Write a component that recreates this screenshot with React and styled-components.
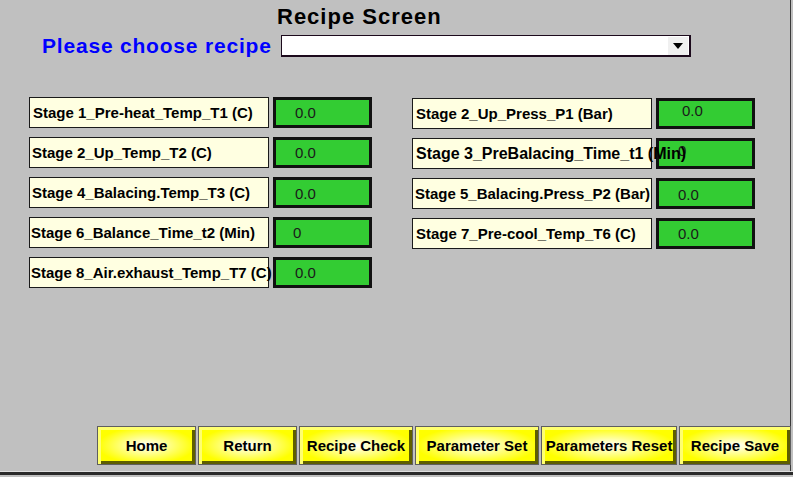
import React from "react";
import styled, { createGlobalStyle } from "styled-components";

const GlobalStyle = createGlobalStyle`
  html, body { margin: 0; padding: 0; background: #c0c0c0; overflow: hidden; }
  * { box-sizing: border-box; }
`;

const Screen = styled.div`
  position: relative;
  width: 793px;
  height: 477px;
  background: #c0c0c0;
  display: flex;
  flex-direction: column;
  padding-top: 5px;
  padding-bottom: 12px;
  font-family: "Liberation Sans", Arial, sans-serif;
  &::before {
    content: "";
    position: absolute;
    top: 0;
    left: 790px;
    width: 1px;
    height: 474px;
    background: #3a3a3a;
    z-index: 0;
  }
  &::after {
    content: "";
    position: absolute;
    left: 0;
    right: 0;
    top: 471px;
    height: 3px;
    border-top: 1px solid #e0e0e0;
    background: #2a2a2a;
    z-index: 0;
  }
`;

const Title = styled.h1`
  margin: 0;
  padding-left: 277px;
  font-size: 22px;
  line-height: 24px;
  font-weight: bold;
  letter-spacing: 1px;
  color: #000;
  white-space: nowrap;
`;

const ChooseRow = styled.div`
  display: flex;
  align-items: center;
  margin-top: 5px;
  padding-left: 42px;
  height: 24px;
`;

const ChooseLabel = styled.div`
  flex: 0 0 239px;
  font-size: 21px;
  line-height: 24px;
  font-weight: bold;
  letter-spacing: 0.8px;
  color: #0000ff;
  white-space: nowrap;
`;

const Dropdown = styled.div`
  width: 410px;
  height: 22px;
  background: #fff;
  border: 2px solid #1c0a1c;
  border-top-width: 1px;
  border-left-width: 1px;
  display: flex;
  justify-content: flex-end;
  align-items: center;
  padding-right: 1px;
`;

const DropArrow = styled.div`
  width: 20px;
  height: 18px;
  background: #f0f0f0;
  display: flex;
  align-items: center;
  justify-content: center;
`;

const Fields = styled.div`
  display: flex;
  gap: 40px;
  margin-top: 39px;
  padding-left: 29px;
`;

const Column = styled.div`
  display: flex;
  flex-direction: column;
  gap: 9px;
  margin-top: ${(p) => p.$top || 0}px;
`;

const Row = styled.div`
  display: flex;
  gap: 4px;
  height: 31px;
`;

const Label = styled.div`
  width: 240px;
  height: 31px;
  flex: 0 0 240px;
  background: #ffffe1;
  border: 1px solid #1a1a1a;
  display: flex;
  align-items: center;
  padding-left: ${(p) => p.$indent}px;
  position: relative;
  z-index: 2;
`;

const LabelText = styled.span`
  font-size: ${(p) => (p.$big ? 16 : 15)}px;
  font-weight: bold;
  color: #000;
  white-space: nowrap;
  position: relative;
  z-index: 3;
`;

const Value = styled.div`
  width: 99px;
  height: 31px;
  flex: 0 0 99px;
  background: #33cc33;
  border: 3px solid #111;
  display: flex;
  align-items: center;
  padding-left: ${(p) => p.$pad}px;
  font-size: 15px;
  color: #1a1a1a;
  position: relative;
  z-index: 1;
`;

const ValueText = styled.span`
  transform: translateY(${(p) => p.$shift || 0}px);
`;

const ButtonRow = styled.div`
  margin-top: auto;
  display: flex;
  gap: 2px;
  padding-left: 97px;
  position: relative;
  z-index: 1;
`;

const Button = styled.button`
  width: ${(p) => p.$w}px;
  height: 39px;
  flex: 0 0 ${(p) => p.$w}px;
  padding: 0;
  border: 1px solid #5e5e5e;
  background: radial-gradient(ellipse closest-side at 50% 50%, #ffffff 0%, #ffff66 60%, #ffff00 100%);
  box-shadow: inset 3px 3px 0 #ffff70, inset -3px -3px 0 #5e5e00;
  font-family: "Liberation Sans", Arial, sans-serif;
  font-size: 15px;
  font-weight: bold;
  color: #000;
  white-space: nowrap;
  overflow: visible;
  cursor: pointer;
`;

const left = [
  { label: "Stage 1_Pre-heat_Temp_T1 (C)", value: "0.0", indent: 3, pad: 19 },
  { label: "Stage 2_Up_Temp_T2 (C)", value: "0.0", indent: 2, pad: 19 },
  { label: "Stage 4_Balacing.Temp_T3 (C)", value: "0.0", indent: 2, pad: 19, shift: 1 },
  { label: "Stage 6_Balance_Time_t2 (Min)", value: "0", indent: 1, pad: 17 },
  { label: "Stage 8_Air.exhaust_Temp_T7 (C)", value: "0.0", indent: 1, pad: 19 },
];

const right = [
  { label: "Stage 2_Up_Press_P1 (Bar)", value: "0.0", indent: 3, pad: 23, shift: -3 },
  { label: "Stage 3_PreBalacing_Time_t1 (Min)", value: "0", indent: 3, pad: 19, shift: -3, big: true },
  { label: "Stage 5_Balacing.Press_P2 (Bar)", value: "0.0", indent: 2, pad: 19, shift: 1 },
  { label: "Stage 7_Pre-cool_Temp_T6 (C)", value: "0.0", indent: 3, pad: 19 },
];

const buttons = [
  { text: "Home", w: 99 },
  { text: "Return", w: 99 },
  { text: "Recipe Check", w: 114 },
  { text: "Parameter Set", w: 124 },
  { text: "Parameters Reset", w: 136 },
  { text: "Recipe Save", w: 112 },
];

function Field({ f }) {
  return (
    <Row>
      <Label $indent={f.indent}>
        <LabelText $big={f.big}>{f.label}</LabelText>
      </Label>
      <Value $pad={f.pad}>
        <ValueText $shift={f.shift}>{f.value}</ValueText>
      </Value>
    </Row>
  );
}

export default function App() {
  return (
    <>
      <GlobalStyle />
      <Screen>
        <Title>Recipe Screen</Title>
        <ChooseRow>
          <ChooseLabel>Please choose recipe</ChooseLabel>
          <Dropdown>
            <DropArrow>
              <svg width="10" height="6" viewBox="0 0 10 6">
                <path d="M0 0 H10 L5 6 Z" fill="#000" />
              </svg>
            </DropArrow>
          </Dropdown>
        </ChooseRow>
        <Fields>
          <Column>
            {left.map((f) => (
              <Field key={f.label} f={f} />
            ))}
          </Column>
          <Column $top={1}>
            {right.map((f) => (
              <Field key={f.label} f={f} />
            ))}
          </Column>
        </Fields>
        <ButtonRow>
          {buttons.map((b) => (
            <Button key={b.text} $w={b.w}>
              {b.text}
            </Button>
          ))}
        </ButtonRow>
      </Screen>
    </>
  );
}
